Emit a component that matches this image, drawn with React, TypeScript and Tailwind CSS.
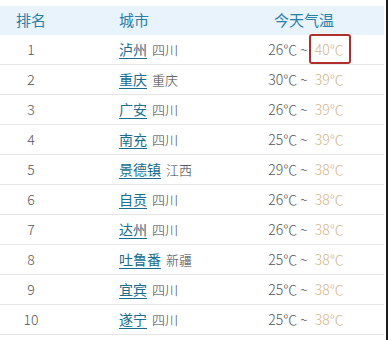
const rows = [
	{ rank: 1, city: "泸州", prov: "四川", low: 26, high: 40 },
	{ rank: 2, city: "重庆", prov: "重庆", low: 30, high: 39 },
	{ rank: 3, city: "广安", prov: "四川", low: 26, high: 39 },
	{ rank: 4, city: "南充", prov: "四川", low: 25, high: 39 },
	{ rank: 5, city: "景德镇", prov: "江西", low: 29, high: 38 },
	{ rank: 6, city: "自贡", prov: "四川", low: 26, high: 38 },
	{ rank: 7, city: "达州", prov: "四川", low: 26, high: 38 },
	{ rank: 8, city: "吐鲁番", prov: "新疆", low: 25, high: 38 },
	{ rank: 9, city: "宜宾", prov: "四川", low: 25, high: 38 },
	{ rank: 10, city: "遂宁", prov: "四川", low: 25, high: 38 },
];

const App = () => {
	return (
		<div
			className="relative flex w-[388px] h-[340px] bg-white overflow-hidden"
			style={{ fontFamily: '"Noto Sans CJK SC", "Noto Sans", sans-serif' }}
		>
			<div className="w-[384px] pt-[6px]">
				<div className="flex items-center h-[29px] bg-[#e8f3fc] text-[#2a7fa6] text-[15px]">
					<div className="w-[62px] text-center">排名</div>
					<div className="ml-[57px] w-[107px]">城市</div>
					<div className="flex-1 text-center pr-[2px]">今天气温</div>
				</div>
				{rows.map((r) => (
					<div
						key={r.rank}
						className="flex items-center h-[30px] border-b border-[#e6e6e6] text-[14px] text-[#555] font-light"
					>
						<div className="w-[62px] text-center">{r.rank}</div>
						<div className="ml-[57px] w-[107px] flex items-baseline gap-[5px]">
							<span className="text-[#1a6d8c] underline underline-offset-[3px] font-normal">
								{r.city}
							</span>
							<span className="text-[13px] text-[#444]">{r.prov}</span>
						</div>
						<div className="flex-1 text-center whitespace-nowrap pl-[2px]">
							{r.low}℃ ~ <span className="ml-[4px] text-[#d6b589]">{r.high}℃</span>
						</div>
					</div>
				))}
			</div>
			<div className="w-[2px]" />
			<div className="w-[2px] bg-[#1c1c1c]" />
			<div className="absolute left-[309px] top-[34px] w-[42px] h-[30px] border-2 border-[#b02f2c] rounded-[3px]" />
		</div>
	);
};

export default App;
